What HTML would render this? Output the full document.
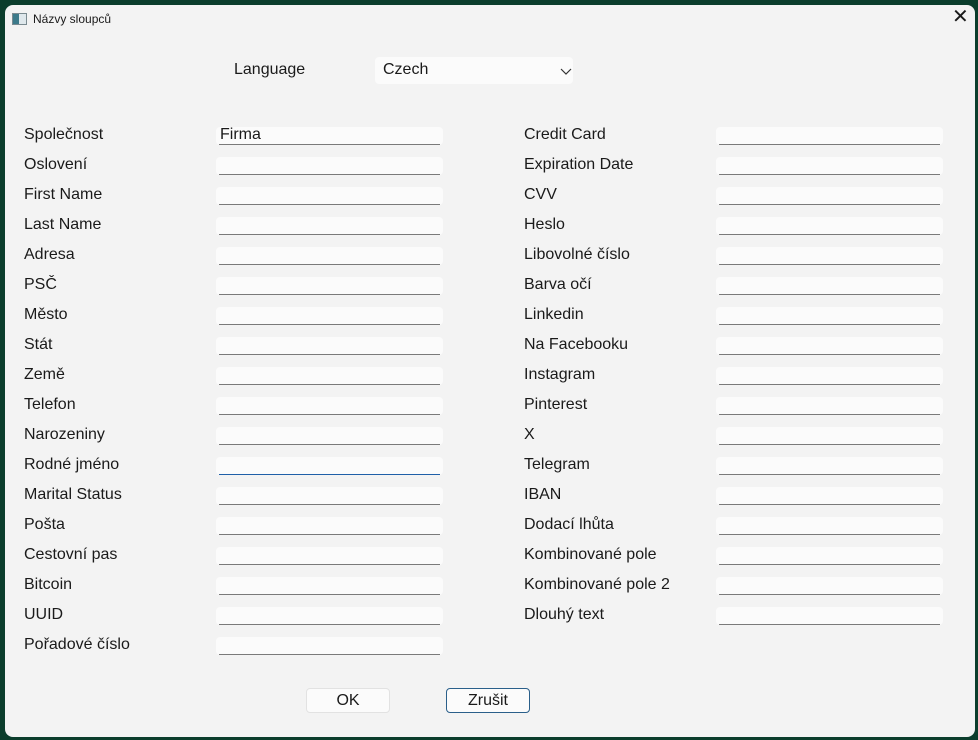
<!DOCTYPE html>
<html><head><meta charset="utf-8"><style>
body{margin:0;width:978px;height:740px;background:#0b3d2c;position:relative;overflow:hidden;font-family:"Liberation Sans",sans-serif;}
.win{position:absolute;left:5px;top:5px;width:970px;height:732px;background:#f3f3f3;border-radius:8px;}
.t{position:absolute;font-size:16px;color:#1a1a1a;line-height:20px;white-space:nowrap}
.in{position:absolute;width:227px;height:18px;background:#fbfbfb;border-radius:4px;}
.in:after{content:"";position:absolute;left:3px;right:3px;bottom:0;height:1px;background:#7a7a7a}
.in.f:after{background:#1f5fa8}
.btn{position:absolute;width:84px;height:25px;background:#fbfbfb;border:1px solid #e2e2e2;border-radius:4px;font-size:16px;text-align:center;line-height:24px;box-sizing:border-box;color:#1a1a1a}
</style></head><body>
<div class="win">
<div style="position:absolute;left:7px;top:8px;width:13px;height:10px;border:1px solid #7a8a90;background:linear-gradient(90deg,#3c7a8a 0 45%,#dfe8ec 45%)"></div>
<div class="t" style="left:28px;top:4px;font-size:12px">Názvy sloupců</div>
<div class="t" style="left:947px;top:2px;font-size:20px;font-weight:300">✕</div>
<div class="t" style="left:229px;top:55px">Language</div>
<div style="position:absolute;left:370px;top:52px;width:198px;height:27px;background:#fbfbfb;border-radius:4px"></div>
<div class="t" style="left:378px;top:55px">Czech</div>
<svg style="position:absolute;left:555px;top:62px" width="12" height="8"><path d="M1 2 L6 7 L11 2" fill="none" stroke="#333" stroke-width="1.2"/></svg>
</div>
<div id="c"></div>
<script>
var L=["Společnost","Oslovení","First Name","Last Name","Adresa","PSČ","Město","Stát","Země","Telefon","Narozeniny","Rodné jméno","Marital Status","Pošta","Cestovní pas","Bitcoin","UUID","Pořadové číslo"];
var R=["Credit Card","Expiration Date","CVV","Heslo","Libovolné číslo","Barva očí","Linkedin","Na Facebooku","Instagram","Pinterest","X","Telegram","IBAN","Dodací lhůta","Kombinované pole","Kombinované pole 2","Dlouhý text"];
var h="";
L.forEach(function(s,i){var y=135+30*i;h+='<div class="t" style="left:24px;top:'+(y-10)+'px">'+s+'</div><div class="in'+(i==11?' f':'')+'" style="left:216px;top:'+(y-8)+'px"></div>';});
R.forEach(function(s,i){var y=135+30*i;h+='<div class="t" style="left:524px;top:'+(y-10)+'px">'+s+'</div><div class="in" style="left:716px;top:'+(y-8)+'px"></div>';});
document.getElementById("c").innerHTML=h;
</script>
<div class="t" style="left:220px;top:125px">Firma</div>
<style>.in:first-of-type{}</style>
<div class="btn" style="left:306px;top:688px">OK</div>
<div class="btn" style="left:446px;top:688px;border-color:#2a5f8a">Zrušit</div>
</body></html>
